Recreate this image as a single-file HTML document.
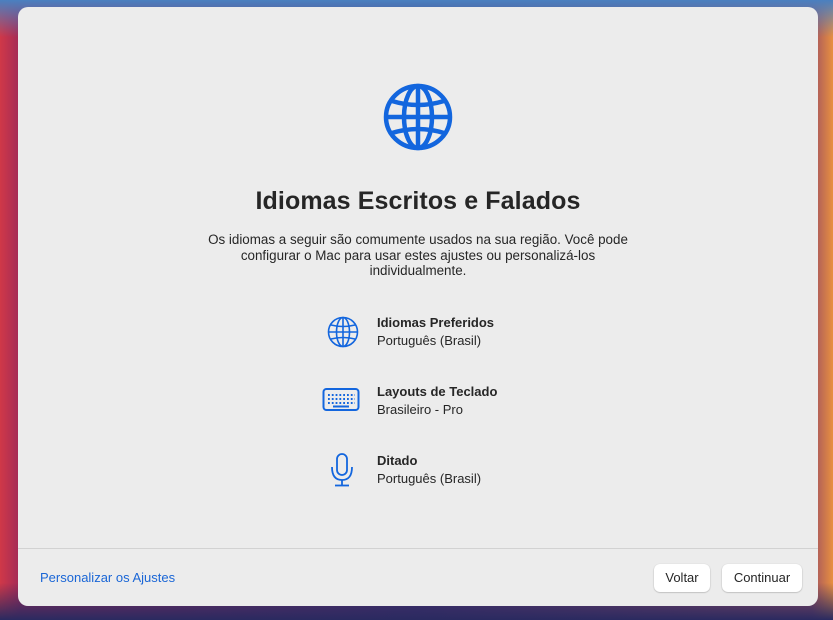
<!DOCTYPE html>
<html><head><meta charset="utf-8"><style>
*{margin:0;padding:0;box-sizing:border-box}
body{width:833px;height:620px;overflow:hidden;font-family:"Liberation Sans",sans-serif;position:relative;
background:linear-gradient(180deg,#4a80c0 0%,rgba(0,0,0,0) 6%,rgba(0,0,0,0) 94%,#2a2a60 100%),
linear-gradient(90deg,#d03848 0%,#a02a58 2.5%,#4a3070 50%,#a05060 97.5%,#e89040 100%)}
.win{position:absolute;left:18px;top:7px;width:800px;height:599px;background:#ececec;border-radius:10px;overflow:hidden}
.t{position:absolute;left:0;width:800px;text-align:center;color:#262626}
h1{position:absolute;top:180px;width:800px;text-align:center;font-size:25px;font-weight:bold;color:#262626;letter-spacing:0.1px}
.p{top:225px;font-size:13.4px;line-height:15.5px}
.item{position:absolute;left:359px;font-size:13px;color:#262626;line-height:18px}
.item b{display:block}
.ic{position:absolute}
.div{position:absolute;top:541px;left:0;width:800px;height:1px;background:#d2d2d2}
.link{position:absolute;left:22px;top:563px;font-size:13px;color:#1a66d6}
.btn{position:absolute;top:557px;height:28px;background:#fff;border-radius:6px;box-shadow:0 0.5px 1.5px rgba(0,0,0,.3);font-size:13px;color:#262626;text-align:center;line-height:27px}
</style></head><body>
<div class="win">
<svg class="ic" style="left:364px;top:76px" width="72" height="72" viewBox="0 0 72 72" fill="none" stroke="#1366de" stroke-width="4.5">
<ellipse cx="36" cy="34" rx="32" ry="31"/><ellipse cx="36" cy="34" rx="14" ry="31"/><line x1="36" y1="3" x2="36" y2="65"/>
<line x1="4" y1="34" x2="68" y2="34"/><path d="M10 18 Q36 26 62 18"/><path d="M10 50 Q36 42 62 50"/></svg>
<h1>Idiomas Escritos e Falados</h1>
<div class="t p">Os idiomas a seguir são comumente usados na sua região. Você pode<br>configurar o Mac para usar estes ajustes ou personalizá-los<br>individualmente.</div>

<svg class="ic" style="left:309px;top:309px" width="32" height="32" viewBox="0 0 32 32" fill="none" stroke="#1366de" stroke-width="1.6">
<ellipse cx="16" cy="16" rx="14.5" ry="14.5"/><ellipse cx="16" cy="16" rx="6.5" ry="14.5"/><line x1="16" y1="1.5" x2="16" y2="30.5"/>
<line x1="1.5" y1="16" x2="30.5" y2="16"/><path d="M4 9 Q16 12 28 9"/><path d="M4 23 Q16 20 28 23"/></svg>
<div class="item" style="top:307px"><b>Idiomas Preferidos</b>Português (Brasil)</div>

<svg class="ic" style="left:304px;top:380px" width="38" height="26" viewBox="0 0 38 26" fill="none" stroke="#1366de" stroke-width="2">
<rect x="1.5" y="2" width="35" height="21" rx="3"/>
<g stroke-width="2" stroke-dasharray="1.8 2"><line x1="6" y1="8" x2="33" y2="8"/><line x1="6" y1="12" x2="33" y2="12"/><line x1="6" y1="16" x2="33" y2="16"/></g>
<line x1="11" y1="19.5" x2="27" y2="19.5"/></svg>
<div class="item" style="top:376px"><b>Layouts de Teclado</b>Brasileiro - Pro</div>

<svg class="ic" style="left:310px;top:445px" width="28" height="36" viewBox="0 0 28 36" fill="none" stroke="#1366de" stroke-width="1.8">
<rect x="9" y="2" width="10" height="21" rx="5"/><path d="M4 15 Q4 28 14 28 Q24 28 24 15"/><line x1="14" y1="28" x2="14" y2="33"/><line x1="7" y1="33.5" x2="21" y2="33.5"/></svg>
<div class="item" style="top:445px"><b>Ditado</b>Português (Brasil)</div>

<div class="div"></div>
<div class="link">Personalizar os Ajustes</div>
<div class="btn" style="left:636px;width:56px">Voltar</div>
<div class="btn" style="left:704px;width:80px">Continuar</div>
</div>
</body></html>
